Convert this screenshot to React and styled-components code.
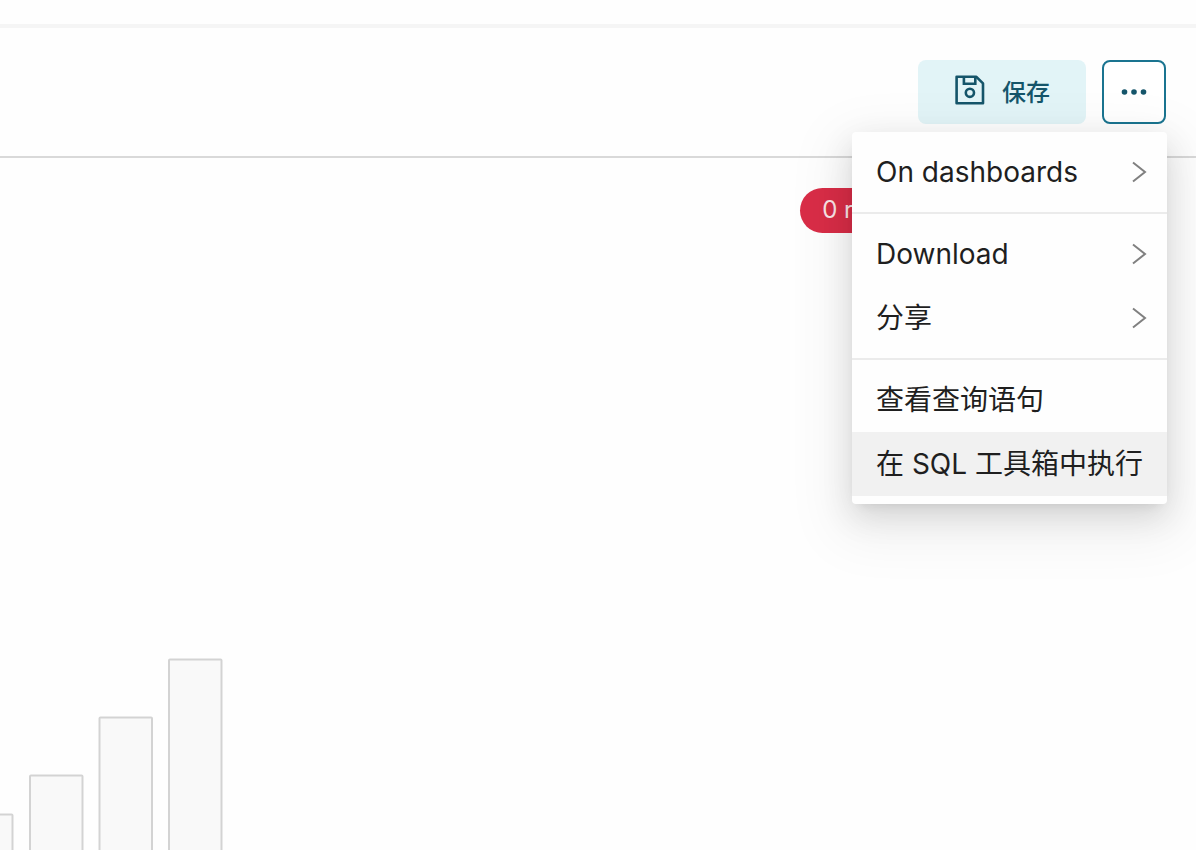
import React from 'react';
import styled, { createGlobalStyle } from 'styled-components';

const GlobalStyle = createGlobalStyle`
  * {
    box-sizing: border-box;
  }

  body {
    margin: 0;
    background-color: #fefefe;
    font-family: Inter, "Noto Sans CJK SC", sans-serif;
    color: #1f1f1f;
  }
`;

const Page = styled.div`
  display: flex;
  flex-direction: column;
  min-height: 100vh;
  overflow: hidden;
`;

const TopBar = styled.div`
  height: 28px;
  background-color: #fefefe;
  border-bottom: 4px solid #f5f5f5;
`;

const Header = styled.header`
  display: flex;
  justify-content: flex-end;
  gap: 16px;
  padding: 32px 30px;
  border-bottom: 2px solid #d9d9d9;
`;

const SaveButton = styled.button`
  display: flex;
  align-items: center;
  justify-content: center;
  gap: 16px;
  width: 168px;
  height: 64px;
  padding: 0 0 4px;
  border: none;
  border-radius: 8px;
  background-color: #e2f4f7;
  color: #15556a;
  font-family: inherit;
  font-size: 24px;
  font-weight: 500;
  cursor: pointer;
`;

const MenuAnchor = styled.div`
  position: relative;
`;

const MoreButton = styled.button`
  display: flex;
  align-items: center;
  justify-content: center;
  width: 64px;
  height: 64px;
  padding: 0;
  border: 2px solid #1a7490;
  border-radius: 8px;
  background-color: #ffffff;
  color: #15556a;
  cursor: pointer;
`;

const Menu = styled.ul`
  position: absolute;
  top: 72px;
  right: -1px;
  z-index: 10;
  margin: 0;
  padding: 8px 0;
  list-style: none;
  background-color: #fefefe;
  border-radius: 4px;
  box-shadow:
    0 6px 12px -8px rgba(0, 0, 0, 0.14),
    0 12px 32px 0 rgba(0, 0, 0, 0.12),
    0 18px 56px 16px rgba(0, 0, 0, 0.06);
`;

const MenuItem = styled.button`
  display: flex;
  align-items: center;
  justify-content: space-between;
  width: 100%;
  height: 64px;
  padding: 0 20px 0 24px;
  border: none;
  background-color: ${({ $active }) => ($active ? '#f1f1f1' : 'transparent')};
  color: inherit;
  font-family: inherit;
  font-size: 28px;
  line-height: 44px;
  text-align: left;
  white-space: nowrap;
  cursor: pointer;
`;

const MenuLabel = styled.span`
  padding-right: 4px;
`;

const Divider = styled.li`
  height: 2px;
  margin: 8px 0;
  background-color: #ebebeb;
`;

const Main = styled.main`
  display: flex;
  flex: 1;
  flex-direction: column;
  justify-content: space-between;
`;

const Labels = styled.div`
  display: flex;
  justify-content: flex-end;
  padding: 30px 275px 0 0;
`;

const RowCount = styled.span`
  height: 45px;
  padding: 0 22px;
  border-radius: 24px;
  background-color: #d92d47;
  color: #fae4e7;
  font-size: 24px;
  line-height: 44px;
`;

const EmptyChart = styled.svg`
  display: block;
`;

const BARS = [
  { x: -40, height: 35.5 },
  { x: 30, height: 74.5 },
  { x: 99.5, height: 132.5 },
  { x: 169, height: 190.5 },
];

const MENU = [
  [{ label: 'On dashboards', submenu: true }],
  [
    { label: 'Download', submenu: true },
    { label: '分享', submenu: true },
  ],
  [{ label: '查看查询语句' }, { label: '在 SQL 工具箱中执行', active: true }],
];

const SaveIcon = () => (
  <svg width="32" height="32" viewBox="0 0 32 32" fill="none" stroke="currentColor" strokeWidth="2.6" aria-hidden="true">
    <path d="M2.6 2.8H22.4L29 9.4V29.2H2.6Z" strokeLinejoin="round" />
    <path d="M9.9 2.8V9.8H21.3V2.8" />
    <circle cx="15.9" cy="18.8" r="4.1" />
  </svg>
);

const DotsIcon = () => (
  <svg width="28" height="8" viewBox="0 0 28 8" fill="currentColor" aria-hidden="true">
    <circle cx="4.5" cy="4" r="2.8" />
    <circle cx="14" cy="4" r="2.8" />
    <circle cx="23.5" cy="4" r="2.8" />
  </svg>
);

const ArrowIcon = () => (
  <svg width="16" height="22" viewBox="0 0 16 22" fill="none" stroke="#808080" strokeWidth="2" aria-hidden="true">
    <path d="M2 1.5L14 11L2 20.5" />
  </svg>
);

function ActionsMenu() {
  return (
    <Menu>
      {MENU.map((group, index) => (
        <React.Fragment key={group[0].label}>
          {index > 0 && <Divider role="separator" />}
          {group.map(({ label, submenu, active }) => (
            <li key={label}>
              <MenuItem type="button" $active={active}>
                <MenuLabel>{label}</MenuLabel>
                {submenu && <ArrowIcon />}
              </MenuItem>
            </li>
          ))}
        </React.Fragment>
      ))}
    </Menu>
  );
}

function App() {
  return (
    <>
      <GlobalStyle />
      <Page>
        <TopBar />
        <Header>
          <SaveButton type="button">
            <SaveIcon />
            保存
          </SaveButton>
          <MenuAnchor>
            <MoreButton type="button" aria-label="More actions" aria-expanded="true">
              <DotsIcon />
            </MoreButton>
            <ActionsMenu />
          </MenuAnchor>
        </Header>
        <Main>
          <Labels>
            <RowCount>0 rows</RowCount>
          </Labels>
          <EmptyChart width="240" height="200" viewBox="0 0 240 200" aria-hidden="true">
            {BARS.map(({ x, height }) => (
              <rect
                key={x}
                x={x}
                y={200 - height}
                width="52.5"
                height={height + 10}
                rx="1"
                fill="#f9f9f9"
                stroke="#d3d3d3"
                strokeWidth="2"
              />
            ))}
          </EmptyChart>
        </Main>
      </Page>
    </>
  );
}

export default App;
